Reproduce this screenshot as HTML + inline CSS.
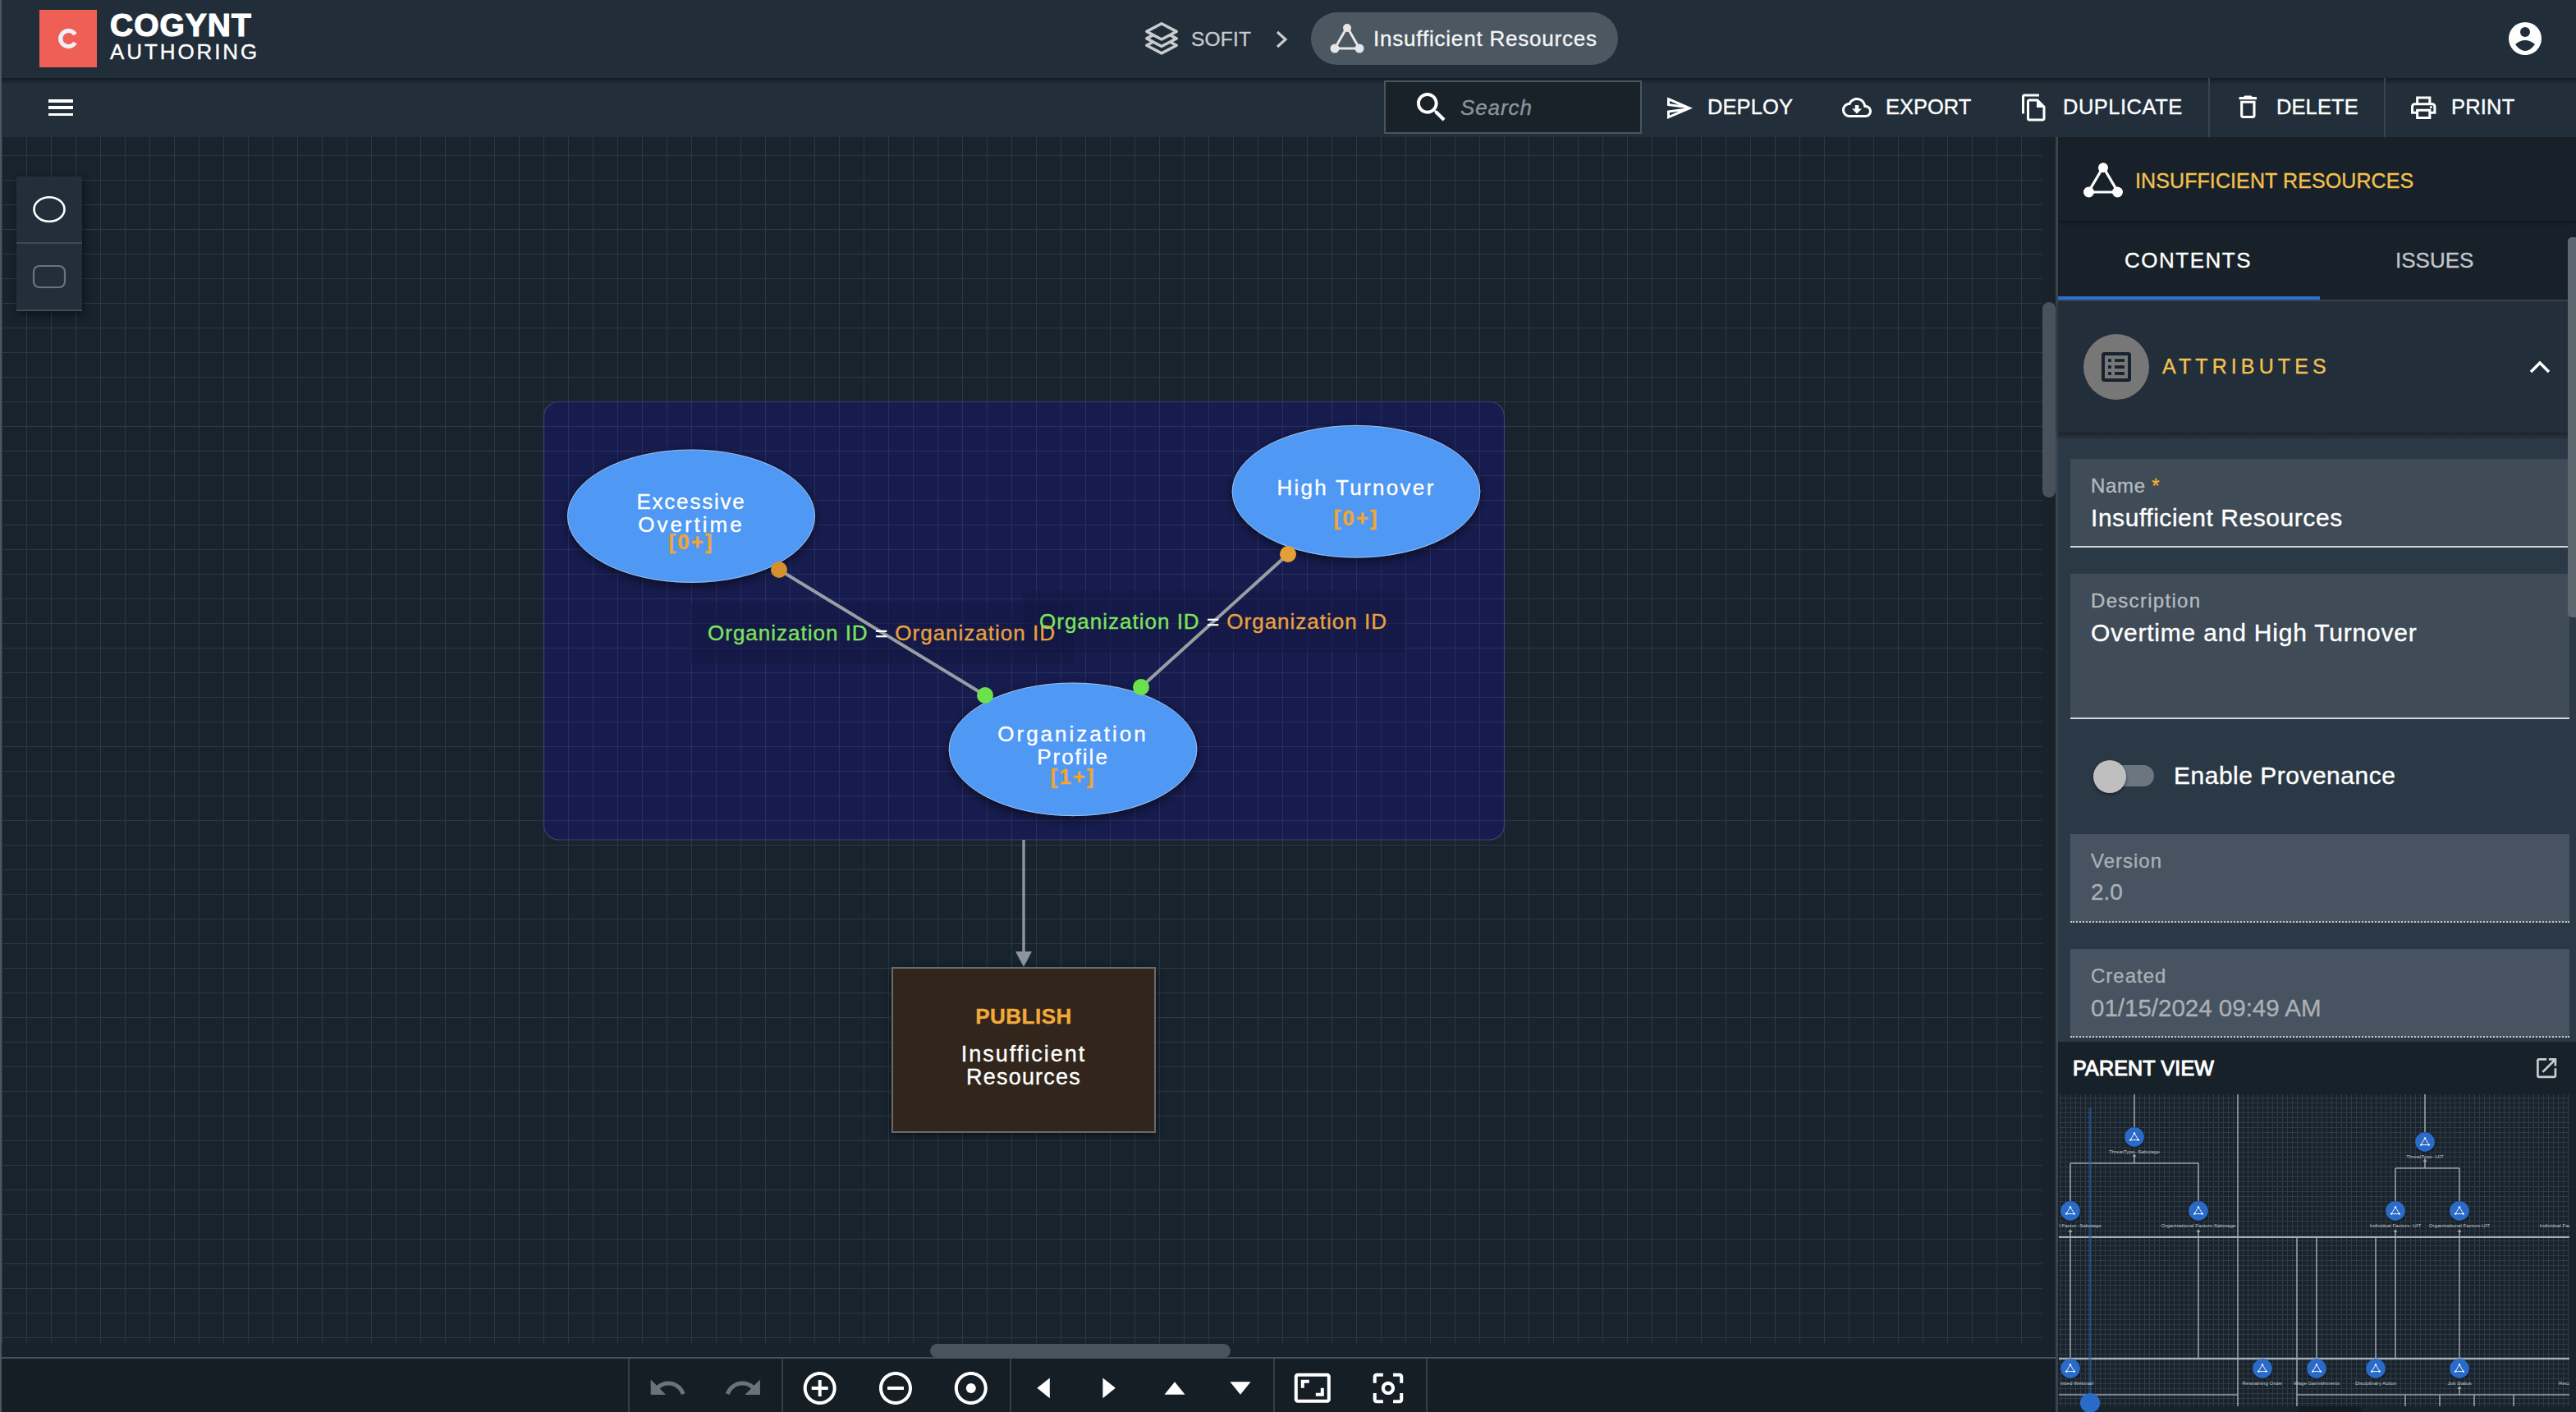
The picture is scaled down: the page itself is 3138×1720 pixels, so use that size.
<!DOCTYPE html>
<html><head><meta charset="utf-8">
<style>
*{box-sizing:border-box;margin:0;padding:0}
html,body{width:3138px;height:1720px;overflow:hidden;background:#18232c;font-family:"Liberation Sans",sans-serif;color:#fff}
.a{position:absolute}
.t{position:absolute;white-space:nowrap;line-height:1}
body div{-webkit-text-stroke:0.35px currentColor}
#hdr{left:0;top:0;width:3138px;height:95px;background:#212d39}
#tb{left:0;top:95px;width:3138px;height:72px;background:#222f3b}
#canvas{left:2px;top:167px;width:2486px;height:1469px;background-color:#17232d;
 background-image:linear-gradient(to right,#2c3944 1px,transparent 1px),linear-gradient(to bottom,#2c3944 1px,transparent 1px);
 background-size:30px 30px;background-position:0px 22px}
#lborder{left:0;top:0;width:2px;height:1720px;background:#4b5660}
#rpanel{left:2505px;top:167px;width:633px;height:1553px;background:#2b3845}
#btb{left:2px;top:1653px;width:2503px;height:67px;background:#151d25;border-top:2px solid #44505a}
</style></head>
<body>
<div id="hdr" class="a"></div>
<div id="tb" class="a"></div>
<div class="a" style="left:0;top:95px;width:3138px;height:8px;background:linear-gradient(to bottom,rgba(0,0,0,.42),rgba(0,0,0,0))"></div>
<div id="canvas" class="a"></div>
<div class="a" style="left:2px;top:1636px;width:2503px;height:17px;background:#18222b"></div>
<div class="a" style="left:2488px;top:167px;width:17px;height:1469px;background:#18222b"></div>
<div id="btb" class="a"></div>
<div id="rpanel" class="a"></div>

<!-- HEADER -->
<div class="a" style="left:48px;top:12px;width:70px;height:70px;background:#ef5f56"></div>
<svg class="a" style="left:60px;top:24px" width="46" height="46" viewBox="0 0 46 46"><path d="M31.5 18 A9.6 9.6 0 1 0 31.5 28" fill="none" stroke="#eef0f8" stroke-width="5.2"/></svg>
<div class="t" style="left:134px;top:11px;font-size:39px;font-weight:700;letter-spacing:1px;-webkit-text-stroke:1.2px #fff">COGYNT</div>
<div class="t" style="left:134px;top:50px;font-size:26px;letter-spacing:2.9px">AUTHORING</div>
<svg class="a" style="left:1393px;top:25px" width="44" height="46" viewBox="0 0 44 46" stroke="#c9cbce" stroke-width="3.5" stroke-linejoin="round" fill="#212d39"><path d="M22 20.7 L40.2 30.3 L22 39.9 L3.8 30.3 Z"/><path d="M22 12.25 L40.2 21.85 L22 31.45 L3.8 21.85 Z"/><path d="M22 3.8 L40.2 13.4 L22 23 L3.8 13.4 Z"/></svg>
<div class="t" style="left:1451px;top:36px;font-size:24.5px;color:#c8cacd;letter-spacing:0.2px">SOFIT</div>
<svg class="a" style="left:1552px;top:36px" width="20" height="24" viewBox="0 0 20 24"><path d="M4 3 L14 12 L4 21" fill="none" stroke="#c8cacd" stroke-width="3.2"/></svg>
<div class="a" style="left:1597px;top:15px;width:374px;height:64px;border-radius:32px;background:#4b5862"></div>
<svg class="a" style="left:1618px;top:27px" width="46" height="40" viewBox="0 0 46 40"><path d="M23 6 L8 32 L38 32 Z" fill="none" stroke="#e6e6e6" stroke-width="3"/><circle cx="23" cy="7" r="5" fill="#e6e6e6"/><circle cx="8" cy="32" r="5.5" fill="#e6e6e6"/><circle cx="38" cy="32" r="5.5" fill="#e6e6e6"/></svg>
<div class="t" style="left:1673px;top:34px;font-size:26px;letter-spacing:0.8px;color:#f4f4f4">Insufficient Resources</div>
<svg class="a" style="left:3054px;top:25px" width="44" height="44" viewBox="0 0 44 44"><circle cx="22" cy="22" r="20" fill="#fff"/><circle cx="22" cy="14" r="6" fill="#212d38"/><path d="M10 29 Q22 19 34 29 Q28 37 22 37 Q16 37 10 29 Z" fill="#212d38"/></svg>
<!-- TOOLBAR -->
<div class="a" style="left:59px;top:121px;width:30px;height:3.5px;background:#fff"></div>
<div class="a" style="left:59px;top:129px;width:30px;height:3.7px;background:#fff"></div>
<div class="a" style="left:59px;top:137.5px;width:30px;height:3.6px;background:#fff"></div>
<div class="a" style="left:1686px;top:98px;width:314px;height:65px;background:#1a2229;border:2px solid #4b555e"></div>
<svg class="a" style="left:1720px;top:107px" width="47.5" height="47.5" viewBox="0 0 24 24"><path d="M15.5 14h-.79l-.28-.27C15.41 12.59 16 11.11 16 9.5 16 5.91 13.09 3 9.5 3S3 5.91 3 9.5 5.91 16 9.5 16c1.61 0 3.09-.59 4.23-1.57l.27.28v.79l5 4.99L20.49 19l-4.99-5zm-6 0C7.01 14 5 11.99 5 9.5S7.01 5 9.5 5 14 7.01 14 9.5 11.99 14 9.5 14z" fill="#fff"/></svg>
<div class="t" style="left:1779px;top:118px;font-size:26px;font-style:italic;letter-spacing:0.9px;color:#8d949a">Search</div>
<svg class="a" style="left:2028px;top:113.5px" width="35.4" height="35.4" viewBox="0 0 24 24"><path d="M4.01 6.03l7.51 3.22-7.52-1 .01-2.22m7.5 8.72L4 17.97v-2.22l7.51-1M2.01 3L2 10l15 2-15 2 .01 7L23 12 2.01 3z" fill="#fff"/></svg>
<div class="t" style="left:2080px;top:118px;font-size:25.5px;letter-spacing:0.1px">DEPLOY</div>
<svg class="a" style="left:2244px;top:112.7px" width="36.0" height="36.0" viewBox="0 0 24 24"><path d="M19.35 10.04C18.67 6.59 15.64 4 12 4 9.11 4 6.6 5.64 5.35 8.04 2.34 8.36 0 10.91 0 14c0 3.31 2.69 6 6 6h13c2.76 0 5-2.24 5-5 0-2.64-2.05-4.78-4.65-4.96zM19 18H6c-2.21 0-4-1.79-4-4 0-2.05 1.53-3.76 3.56-3.97l1.07-.11.5-.95C8.08 7.14 9.94 6 12 6c2.62 0 4.88 1.86 5.39 4.43l.3 1.5 1.53.11c1.56.1 2.78 1.41 2.78 2.96 0 1.65-1.35 3-3 3zm-5.55-8h-2.9v3H8l4 4 4-4h-2.55z" fill="#fff"/></svg>
<div class="t" style="left:2297px;top:118px;font-size:25.5px;letter-spacing:0px">EXPORT</div>
<svg class="a" style="left:2459.6px;top:112.5px" width="36.0" height="36.0" viewBox="0 0 24 24"><path d="M16 1H4c-1.1 0-2 .9-2 2v14h2V3h12V1zm-1 4H8c-1.1 0-1.99.9-1.99 2L6 21c0 1.1.89 2 1.99 2H19c1.1 0 2-.9 2-2V11l-6-6zM8 21V7h6v5h5v9H8z" fill="#fff"/></svg>
<div class="t" style="left:2513px;top:118px;font-size:25.5px;letter-spacing:0.5px">DUPLICATE</div>
<div class="a" style="left:2690px;top:95px;width:2px;height:72px;background:#37434e"></div>
<svg class="a" style="left:2719.8px;top:112.4px" width="36.7" height="36.7" viewBox="0 0 24 24"><path d="M6 19c0 1.1.9 2 2 2h8c1.1 0 2-.9 2-2V7H6v12zM8 9h8v10H8V9zm7.5-5l-1-1h-5l-1 1H5v2h14V4z" fill="#fff"/></svg>
<div class="t" style="left:2773px;top:118px;font-size:25.5px;letter-spacing:0.1px">DELETE</div>
<div class="a" style="left:2904px;top:95px;width:2px;height:72px;background:#37434e"></div>
<svg class="a" style="left:2933.6px;top:112.5px" width="36.5" height="36.5" viewBox="0 0 24 24"><path d="M19 8h-1V3H6v5H5c-1.66 0-3 1.34-3 3v6h4v4h12v-4h4v-6c0-1.66-1.34-3-3-3zM8 5h8v3H8V5zm8 12v2H8v-4h8v2zm2-2v-2H6v2H4v-4c0-.55.45-1 1-1h14c.55 0 1 .45 1 1v4h-2z" fill="#fff"/><circle cx="18" cy="11.5" r="1" fill="#fff"/></svg>
<div class="t" style="left:2986px;top:118px;font-size:25.5px;letter-spacing:0.2px">PRINT</div>


<!-- CANVAS DIAGRAM -->
<svg class="a" style="left:0;top:0" width="3138" height="1720" viewBox="0 0 3138 1720">
<defs>
<filter id="sh" x="-20%" y="-30%" width="140%" height="160%"><feDropShadow dx="0" dy="4" stdDeviation="7" flood-color="#000" flood-opacity="0.55"/></filter>
<filter id="sh2" x="-20%" y="-20%" width="140%" height="140%"><feDropShadow dx="0" dy="3" stdDeviation="6" flood-color="#000" flood-opacity="0.5"/></filter>
<pattern id="g2" x="2" y="9" width="30" height="30" patternUnits="userSpaceOnUse"><rect width="30" height="30" fill="#171c4f"/><rect width="1" height="30" fill="#292f5f"/><rect width="30" height="1" fill="#292f5f"/></pattern>
</defs>
<rect x="662.5" y="489.5" width="1170" height="533.5" rx="18" fill="url(#g2)" stroke="#3c4170" stroke-width="1.2"/>
<rect x="842" y="734" width="466" height="75" fill="#12163d" opacity="0.45"/>
<rect x="1246" y="720" width="466" height="75" fill="#12163d" opacity="0.45"/>
<line x1="949" y1="694" x2="1200" y2="847" stroke="#989ea3" stroke-width="4"/>
<line x1="1569" y1="675" x2="1390" y2="837" stroke="#989ea3" stroke-width="4"/>
<g filter="url(#sh)">
<ellipse cx="842" cy="628.7" rx="150.5" ry="80.7" fill="#5098f3" stroke="#9cc4f2" stroke-width="1"/>
<ellipse cx="1652" cy="598.7" rx="150.8" ry="80.3" fill="#5098f3" stroke="#9cc4f2" stroke-width="1"/>
<ellipse cx="1307" cy="912.8" rx="150.8" ry="80.8" fill="#5098f3" stroke="#9cc4f2" stroke-width="1"/>
</g>
<circle cx="949" cy="694" r="10" fill="#d58f2c"/>
<circle cx="1569" cy="675" r="10" fill="#e4a038"/>
<circle cx="1200" cy="847" r="10" fill="#6be24b"/>
<circle cx="1390" cy="837" r="10" fill="#6be24b"/>
<line x1="1247" y1="1023" x2="1247" y2="1162" stroke="#8d949b" stroke-width="3.5"/>
<path d="M1237 1159 L1257 1159 L1247 1178 Z" fill="#8d949b"/>
<rect x="1087" y="1179" width="320" height="200" fill="#33261a" stroke="#6b6b6b" stroke-width="2" filter="url(#sh2)"/>
</svg>
<div class="t" style="left:862px;top:758px;font-size:26px;letter-spacing:1px;color:#7de35c">Organization ID <span style="color:#fff">=</span> <span style="color:#e9a13f">Organization ID</span></div>
<div class="t" style="left:1266px;top:744px;font-size:26px;letter-spacing:1px;color:#7de35c">Organization ID <span style="color:#fff">=</span> <span style="color:#e9a13f">Organization ID</span></div>
<div class="a" style="left:692px;top:597px;width:300px;text-align:center;font-size:26px;line-height:28px;color:#fff">
<div style="letter-spacing:1.8px">Excessive</div><div style="letter-spacing:3px">Overtime</div><div style="font-weight:700;color:#f2a531;letter-spacing:2px;margin-top:-7px">[0+]</div></div>
<div class="a" style="left:1502px;top:580px;width:300px;text-align:center;font-size:26px;line-height:28px;color:#fff">
<div style="letter-spacing:2.3px">High Turnover</div><div style="font-weight:700;color:#f2a531;letter-spacing:2px;margin-top:9px">[0+]</div></div>
<div class="a" style="left:1157px;top:881px;width:300px;text-align:center;font-size:26px;line-height:27.5px;color:#fff">
<div style="letter-spacing:3px">Organization</div><div style="letter-spacing:2px">Profile</div><div style="font-weight:700;color:#f2a531;letter-spacing:2px;margin-top:-3px">[1+]</div></div>
<div class="a" style="left:1087px;top:1224px;width:320px;text-align:center;font-size:26px;line-height:28px;color:#fff">
<div style="font-weight:700;color:#f2a93a;letter-spacing:0.5px">PUBLISH</div><div style="margin-top:18px;font-size:27px;letter-spacing:2px">Insufficient</div><div style="font-size:27px;letter-spacing:1.2px">Resources</div></div>
<!-- LEFT TOOLS -->
<div class="a" style="left:20px;top:215px;width:80px;height:164px;background:#222e3a;box-shadow:2px 4px 10px rgba(0,0,0,.45)"></div>
<div class="a" style="left:20px;top:295px;width:80px;height:2px;background:#3e4a55"></div>
<div class="a" style="left:20px;top:377px;width:80px;height:2px;background:#3e4a55"></div>
<svg class="a" style="left:38px;top:237px" width="44" height="36" viewBox="0 0 44 36"><ellipse cx="22" cy="18" rx="18.5" ry="14.8" fill="none" stroke="#fff" stroke-width="2.6"/></svg>
<svg class="a" style="left:38px;top:321px" width="44" height="32" viewBox="0 0 44 32"><rect x="3" y="3" width="38" height="26" rx="7" fill="none" stroke="#6b747c" stroke-width="2.2"/></svg>
<!-- BOTTOM TOOLBAR -->
<div class="a" style="left:1133px;top:1637px;width:366px;height:17px;border-radius:8.5px;background:#48535c"></div>
<div class="a" style="left:765px;top:1655px;width:2px;height:65px;background:#333e48"></div>
<div class="a" style="left:952px;top:1655px;width:2px;height:65px;background:#333e48"></div>
<div class="a" style="left:1230px;top:1655px;width:2px;height:65px;background:#333e48"></div>
<div class="a" style="left:1551px;top:1655px;width:2px;height:65px;background:#333e48"></div>
<div class="a" style="left:1737px;top:1655px;width:2px;height:65px;background:#333e48"></div>
<svg class="a" style="left:0;top:1655px" width="2505" height="65" viewBox="0 1655 2505 65"><path transform="translate(788.6 1666.1) scale(2.05)" d="M12.5 8c-2.65 0-5.05.99-6.9 2.6L2 7v9h9l-3.62-3.62c1.39-1.16 3.16-1.88 5.12-1.88 3.54 0 6.55 2.31 7.6 5.5l2.37-.78C21.08 11.03 17.15 8 12.5 8z" fill="#6b737a"/><path transform="translate(880.8 1666.1) scale(2.05)" d="M18.4 10.6C16.55 8.99 14.15 8 11.5 8c-4.65 0-8.58 3.03-9.960 7.22L3.9 16c1.05-3.19 4.05-5.5 7.6-5.5 1.95 0 3.73.72 5.12 1.88L13 16h9V7l-3.6 3.6z" fill="#6b737a"/><path transform="translate(974.7 1667.1) scale(2.0)" d="M13 7h-2v4H7v2h4v4h2v-4h4v-2h-4V7zm-1-5C6.48 2 2 6.48 2 12s4.48 10 10 10 10-4.48 10-10S17.52 2 12 2zm0 18c-4.41 0-8-3.59-8-8s3.59-8 8-8 8 3.59 8 8-3.59 8-8 8z" fill="#fff"/><path transform="translate(1067 1667.1) scale(2.0)" d="M7 11v2h10v-2H7zm5-9C6.48 2 2 6.48 2 12s4.48 10 10 10 10-4.48 10-10S17.52 2 12 2zm0 18c-4.41 0-8-3.59-8-8s3.59-8 8-8 8 3.59 8 8-3.59 8-8 8z" fill="#fff"/><path transform="translate(1158.8 1667.1) scale(2.0)" d="M12 2C6.48 2 2 6.48 2 12s4.48 10 10 10 10-4.48 10-10S17.52 2 12 2zm0 18c-4.42 0-8-3.58-8-8s3.58-8 8-8 8 3.58 8 8-3.58 8-8 8z" fill="#fff"/><circle cx="1182.8" cy="1691.1" r="6" fill="#fff"/><path d="M1263.3 1690.8 L1278.8 1678.6 L1278.8 1703.2 Z" fill="#fff"/><path d="M1358.9 1690.8 L1343.4 1678.6 L1343.4 1703.2 Z" fill="#fff"/><path d="M1418.5 1698.8 L1431 1683.3 L1443.5 1698.8 Z" fill="#fff"/><path d="M1498.4 1683.3 L1523.6 1683.3 L1511 1698.8 Z" fill="#fff"/><path transform="translate(1574.8 1666.8) scale(2.0)" d="M19 12h-2v3h-3v2h5v-5zM7 9h3V7H5v5h2V9zm14-6H3c-1.1 0-2 .9-2 2v14c0 1.1.9 2 2 2h18c1.1 0 2-.9 2-2V5c0-1.1-.9-2-2-2zm0 16.01H3V4.99h18v14.02z" fill="#fff"/><path transform="translate(1666.6 1666.6) scale(2.03)" d="M5 15H3v4c0 1.1.9 2 2 2h4v-2H5v-4zM5 5h4V3H5c-1.1 0-2 .9-2 2v4h2V5zm14-2h-4v2h4v4h2V5c0-1.1-.9-2-2-2zm0 16h-4v2h4c1.1 0 2-.9 2-2v-4h-2v4zM12 8c-2.21 0-4 1.79-4 4s1.79 4 4 4 4-1.79 4-4-1.79-4-4-4zm0 6c-1.1 0-2-.9-2-2s.9-2 2-2 2 .9 2 2-.9 2-2 2z" fill="#fff"/></svg>
<!-- RIGHT PANEL -->
<div class="a" style="left:2504px;top:167px;width:3px;height:1553px;background:#38434c"></div>
<div class="a" style="left:2507px;top:167px;width:631px;height:102px;background:#18212a"></div>
<svg class="a" style="left:2535px;top:195px" width="54" height="48" viewBox="0 0 54 48"><path d="M27 8.5 L9 39 L45 39 Z" fill="none" stroke="#fff" stroke-width="3.2"/><circle cx="27" cy="9.3" r="6" fill="#fff"/><circle cx="9.5" cy="39" r="6.5" fill="#fff"/><circle cx="44.5" cy="39" r="6.5" fill="#fff"/></svg>
<div class="t" style="left:2601px;top:208px;font-size:25px;letter-spacing:0.1px;color:#f2c14e">INSUFFICIENT RESOURCES</div>
<div class="a" style="left:2507px;top:269px;width:631px;height:97px;background:#18212a;box-shadow:inset 0 4px 5px -2px rgba(0,0,0,.35)"></div>
<div class="t" style="left:2588px;top:304px;font-size:26px;letter-spacing:1.5px;color:#fff">CONTENTS</div>
<div class="t" style="left:2918px;top:304px;font-size:26px;letter-spacing:0px;color:#c2c6ca">ISSUES</div>
<div class="a" style="left:2507px;top:365px;width:631px;height:2px;background:#3a4652"></div>
<div class="a" style="left:2507px;top:361px;width:319px;height:4px;background:#2f6fd0"></div>
<div class="a" style="left:2507px;top:367px;width:631px;height:160px;background:#222e3a;box-shadow:0 3px 6px rgba(0,0,0,.4)"></div>
<div class="a" style="left:2507px;top:527px;width:631px;height:742px;background:#2b3946"></div>
<div class="a" style="left:2507px;top:527px;width:631px;height:9px;background:linear-gradient(to bottom,rgba(0,0,0,.38),rgba(0,0,0,0))"></div>
<svg class="a" style="left:2538px;top:407px" width="80" height="80" viewBox="0 0 80 80"><circle cx="40" cy="40" r="40" fill="#777"/><rect x="24" y="24" width="32" height="32" rx="1.5" fill="none" stroke="#17222d" stroke-width="4"/><g fill="#17222d"><rect x="30" y="30.2" width="4" height="3.7"/><rect x="38" y="30.2" width="12" height="3.7"/><rect x="30" y="38.1" width="4" height="3.8"/><rect x="38" y="38.1" width="12" height="3.8"/><rect x="30" y="46.1" width="4" height="3.8"/><rect x="38" y="46.1" width="12" height="3.8"/></g></svg>
<div class="t" style="left:2634px;top:434px;font-size:25px;letter-spacing:5.1px;color:#f2c14e">ATTRIBUTES</div>
<svg class="a" style="left:3080px;top:436px" width="28" height="22" viewBox="0 0 28 22"><path d="M3 17 L14 6 L25 17" fill="none" stroke="#fff" stroke-width="3.5"/></svg>
<div class="a" style="left:2522px;top:559px;width:608px;height:108px;background:#3f4b57;border-bottom:2px solid #d0d4d8"></div>
<div class="t" style="left:2547px;top:580px;font-size:24px;letter-spacing:0.7px;color:#b5babe">Name <span style="color:#f0b429">*</span></div>
<div class="t" style="left:2547px;top:616px;font-size:30px;letter-spacing:0.55px;color:#fff">Insufficient Resources</div>
<div class="a" style="left:2522px;top:699px;width:608px;height:177px;background:#3f4b57;border-bottom:2px solid #d0d4d8"></div>
<div class="t" style="left:2547px;top:720px;font-size:24px;letter-spacing:1.3px;color:#b5babe">Description</div>
<div class="t" style="left:2547px;top:756px;font-size:30px;letter-spacing:0.8px;color:#fff">Overtime and High Turnover</div>
<div class="a" style="left:2550px;top:932px;width:74px;height:26px;border-radius:13px;background:#6b7680"></div>
<div class="a" style="left:2550px;top:926px;width:40px;height:40px;border-radius:20px;background:#bfbfbf;box-shadow:0 2px 4px rgba(0,0,0,.4)"></div>
<div class="t" style="left:2648px;top:930px;font-size:30px;letter-spacing:0.5px;color:#fff">Enable Provenance</div>
<div class="a" style="left:2522px;top:1016px;width:608px;height:108px;background:#475360;border-bottom:2px dotted #c0c4c8"></div>
<div class="t" style="left:2547px;top:1037px;font-size:24px;letter-spacing:1px;color:#a9b0b7">Version</div>
<div class="t" style="left:2547px;top:1073px;font-size:28px;color:#a9b0b7">2.0</div>
<div class="a" style="left:2522px;top:1156px;width:608px;height:108px;background:#475360;border-bottom:2px dotted #c0c4c8"></div>
<div class="t" style="left:2547px;top:1176.5px;font-size:24px;letter-spacing:1px;color:#a9b0b7">Created</div>
<div class="t" style="left:2547px;top:1213px;font-size:29.5px;color:#a9b0b7">01/15/2024 09:49 AM</div>
<div class="a" style="left:2507px;top:1269px;width:631px;height:64px;background:#17212a"></div>
<div class="t" style="left:2525px;top:1289px;font-size:25px;letter-spacing:0.2px;color:#fff;-webkit-text-stroke:1.1px #fff">PARENT VIEW</div>
<svg class="a" style="left:3085.8px;top:1284.8px" width="32.3" height="32.3" viewBox="0 0 24 24"><path d="M19 19H5V5h7V3H5c-1.11 0-2 .9-2 2v14c0 1.1.89 2 2 2h14c1.1 0 2-.9 2-2v-7h-2v7zM14 3v2h3.59l-9.83 9.830 1.41 1.41L19 6.41V10h2V3h-7z" fill="#c9ccd0"/></svg>
<div class="a" style="left:2507px;top:1333px;width:631px;height:387px;background:#18232c"></div>
<div id="mini" class="a" style="left:2508px;top:1333px;width:622px;height:380px;background-color:#18232c;background-image:linear-gradient(to right,#2f3a44 1px,transparent 1px),linear-gradient(to bottom,#2f3a44 1px,transparent 1px);background-size:6px 6px;background-position:2px 4px"></div>
<svg class="a" style="left:2508px;top:1333px" width="622" height="380" viewBox="2508 1333 622 380">
<defs><filter id="ms" x="-50%" y="-50%" width="200%" height="200%"><feDropShadow dx="0.5" dy="1" stdDeviation="1.2" flood-color="#000" flood-opacity="0.6"/></filter></defs>
<g stroke="#98a0a8" stroke-width="1.6" fill="none"><line x1="2600" y1="1333" x2="2600" y2="1373"/><line x1="2954" y1="1333" x2="2954" y2="1379"/><line x1="2522" y1="1417" x2="2678" y2="1417"/><line x1="2522" y1="1417" x2="2522" y2="1463"/><line x1="2678" y1="1417" x2="2678" y2="1463"/><line x1="2600" y1="1408" x2="2600" y2="1417"/><line x1="2918" y1="1423" x2="2996" y2="1423"/><line x1="2918" y1="1423" x2="2918" y2="1463"/><line x1="2996" y1="1423" x2="2996" y2="1463"/><line x1="2954" y1="1414" x2="2954" y2="1423"/><line x1="2726" y1="1333" x2="2726" y2="1713"/><line x1="2522" y1="1500" x2="2522" y2="1655"/><line x1="2678" y1="1500" x2="2678" y2="1655"/><line x1="2918" y1="1500" x2="2918" y2="1655"/><line x1="2996" y1="1500" x2="2996" y2="1655"/><line x1="2798" y1="1507" x2="2798" y2="1713"/><line x1="2822" y1="1507" x2="2822" y2="1655"/><line x1="2894" y1="1507" x2="2894" y2="1655"/><line x1="2508" y1="1699" x2="2726" y2="1699"/><line x1="2798" y1="1699" x2="3130" y2="1699"/><line x1="2930" y1="1699" x2="2930" y2="1713"/><line x1="2972" y1="1699" x2="2972" y2="1713"/><line x1="3014" y1="1699" x2="3014" y2="1713"/><line x1="3062" y1="1699" x2="3062" y2="1713"/><line x1="2996" y1="1690" x2="2996" y2="1699"/></g>
<line x1="2508" y1="1507" x2="3130" y2="1507" stroke="#a4abb2" stroke-width="2"/><line x1="2508" y1="1655" x2="3130" y2="1655" stroke="#a4abb2" stroke-width="2.4"/><path d="M2597.5 1409 L2600 1405 L2602.5 1409 Z" fill="#98a0a8"/><path d="M2951.5 1415 L2954 1411 L2956.5 1415 Z" fill="#98a0a8"/><path d="M2519.5 1501 L2522 1497 L2524.5 1501 Z" fill="#98a0a8"/><path d="M2675.5 1501 L2678 1497 L2680.5 1501 Z" fill="#98a0a8"/><path d="M2915.5 1501 L2918 1497 L2920.5 1501 Z" fill="#98a0a8"/><path d="M2993.5 1501 L2996 1497 L2998.5 1501 Z" fill="#98a0a8"/><path d="M2993.5 1692 L2996 1688 L2998.5 1692 Z" fill="#98a0a8"/><rect x="2544" y="1350" width="4" height="352" fill="#2a5aa0" opacity="0.5"/><circle cx="2600" cy="1385" r="11.8" fill="#2a6ac8" filter="url(#ms)"/><g transform="translate(2600 1385)"><path d="M0 -4.6 L-4.8 3.6 L4.8 3.6 Z" fill="none" stroke="#fff" stroke-width="0.9"/><circle cx="0" cy="-4.6" r="1.2" fill="#fff"/><circle cx="-4.8" cy="3.6" r="1.2" fill="#fff"/><circle cx="4.8" cy="3.6" r="1.2" fill="#fff"/></g><circle cx="2954" cy="1391" r="11.8" fill="#2a6ac8" filter="url(#ms)"/><g transform="translate(2954 1391)"><path d="M0 -4.6 L-4.8 3.6 L4.8 3.6 Z" fill="none" stroke="#fff" stroke-width="0.9"/><circle cx="0" cy="-4.6" r="1.2" fill="#fff"/><circle cx="-4.8" cy="3.6" r="1.2" fill="#fff"/><circle cx="4.8" cy="3.6" r="1.2" fill="#fff"/></g><circle cx="2522" cy="1475" r="11.8" fill="#2a6ac8" filter="url(#ms)"/><g transform="translate(2522 1475)"><path d="M0 -4.6 L-4.8 3.6 L4.8 3.6 Z" fill="none" stroke="#fff" stroke-width="0.9"/><circle cx="0" cy="-4.6" r="1.2" fill="#fff"/><circle cx="-4.8" cy="3.6" r="1.2" fill="#fff"/><circle cx="4.8" cy="3.6" r="1.2" fill="#fff"/></g><circle cx="2678" cy="1475" r="11.8" fill="#2a6ac8" filter="url(#ms)"/><g transform="translate(2678 1475)"><path d="M0 -4.6 L-4.8 3.6 L4.8 3.6 Z" fill="none" stroke="#fff" stroke-width="0.9"/><circle cx="0" cy="-4.6" r="1.2" fill="#fff"/><circle cx="-4.8" cy="3.6" r="1.2" fill="#fff"/><circle cx="4.8" cy="3.6" r="1.2" fill="#fff"/></g><circle cx="2918" cy="1475" r="11.8" fill="#2a6ac8" filter="url(#ms)"/><g transform="translate(2918 1475)"><path d="M0 -4.6 L-4.8 3.6 L4.8 3.6 Z" fill="none" stroke="#fff" stroke-width="0.9"/><circle cx="0" cy="-4.6" r="1.2" fill="#fff"/><circle cx="-4.8" cy="3.6" r="1.2" fill="#fff"/><circle cx="4.8" cy="3.6" r="1.2" fill="#fff"/></g><circle cx="2996" cy="1475" r="11.8" fill="#2a6ac8" filter="url(#ms)"/><g transform="translate(2996 1475)"><path d="M0 -4.6 L-4.8 3.6 L4.8 3.6 Z" fill="none" stroke="#fff" stroke-width="0.9"/><circle cx="0" cy="-4.6" r="1.2" fill="#fff"/><circle cx="-4.8" cy="3.6" r="1.2" fill="#fff"/><circle cx="4.8" cy="3.6" r="1.2" fill="#fff"/></g><circle cx="2522" cy="1667" r="11.8" fill="#2a6ac8" filter="url(#ms)"/><g transform="translate(2522 1667)"><path d="M0 -4.6 L-4.8 3.6 L4.8 3.6 Z" fill="none" stroke="#fff" stroke-width="0.9"/><circle cx="0" cy="-4.6" r="1.2" fill="#fff"/><circle cx="-4.8" cy="3.6" r="1.2" fill="#fff"/><circle cx="4.8" cy="3.6" r="1.2" fill="#fff"/></g><circle cx="2756" cy="1667" r="11.8" fill="#2a6ac8" filter="url(#ms)"/><g transform="translate(2756 1667)"><path d="M0 -4.6 L-4.8 3.6 L4.8 3.6 Z" fill="none" stroke="#fff" stroke-width="0.9"/><circle cx="0" cy="-4.6" r="1.2" fill="#fff"/><circle cx="-4.8" cy="3.6" r="1.2" fill="#fff"/><circle cx="4.8" cy="3.6" r="1.2" fill="#fff"/></g><circle cx="2822" cy="1667" r="11.8" fill="#2a6ac8" filter="url(#ms)"/><g transform="translate(2822 1667)"><path d="M0 -4.6 L-4.8 3.6 L4.8 3.6 Z" fill="none" stroke="#fff" stroke-width="0.9"/><circle cx="0" cy="-4.6" r="1.2" fill="#fff"/><circle cx="-4.8" cy="3.6" r="1.2" fill="#fff"/><circle cx="4.8" cy="3.6" r="1.2" fill="#fff"/></g><circle cx="2894" cy="1667" r="11.8" fill="#2a6ac8" filter="url(#ms)"/><g transform="translate(2894 1667)"><path d="M0 -4.6 L-4.8 3.6 L4.8 3.6 Z" fill="none" stroke="#fff" stroke-width="0.9"/><circle cx="0" cy="-4.6" r="1.2" fill="#fff"/><circle cx="-4.8" cy="3.6" r="1.2" fill="#fff"/><circle cx="4.8" cy="3.6" r="1.2" fill="#fff"/></g><circle cx="2996" cy="1667" r="11.8" fill="#2a6ac8" filter="url(#ms)"/><g transform="translate(2996 1667)"><path d="M0 -4.6 L-4.8 3.6 L4.8 3.6 Z" fill="none" stroke="#fff" stroke-width="0.9"/><circle cx="0" cy="-4.6" r="1.2" fill="#fff"/><circle cx="-4.8" cy="3.6" r="1.2" fill="#fff"/><circle cx="4.8" cy="3.6" r="1.2" fill="#fff"/></g><g font-family="Liberation Sans" font-size="6.2" fill="#c4c8cc" text-anchor="middle"><text x="2600" y="1405">ThreatType--Sabotage</text><text x="2954" y="1411">ThreatType--UIT</text><text x="2534" y="1495">l Factor--Sabotage</text><text x="2678" y="1495">Organizational Factors-Sabotage</text><text x="2918" y="1495">Individual Factors--UIT</text><text x="2996" y="1495">Organizational Factors-UIT</text><text x="3118" y="1495">Individual Factors</text><text x="2530" y="1687">listed Webmail</text><text x="2756" y="1687">Restraining Order</text><text x="2822" y="1687">Wage Garnishments</text><text x="2894" y="1687">Disciplinary Action</text><text x="2996" y="1687">Job Status</text><text x="3117" y="1687" text-anchor="start">Reco</text></g></svg>

<div class="a" style="left:3128px;top:289px;width:10px;height:463px;border-radius:5px 0 0 5px;background:#5d6770"></div>
<div class="a" style="left:2488px;top:368px;width:16px;height:238px;border-radius:8px;background:#48525c"></div>
<div class="a" style="left:2799px;top:1713px;width:78px;height:14px;border-radius:7px;background:#141c23"></div>
<div class="a" style="left:2534px;top:1697px;width:24px;height:24px;border-radius:12px;background:#2a6ac8"></div>
<div id="lborder" class="a"></div>
</body></html>
